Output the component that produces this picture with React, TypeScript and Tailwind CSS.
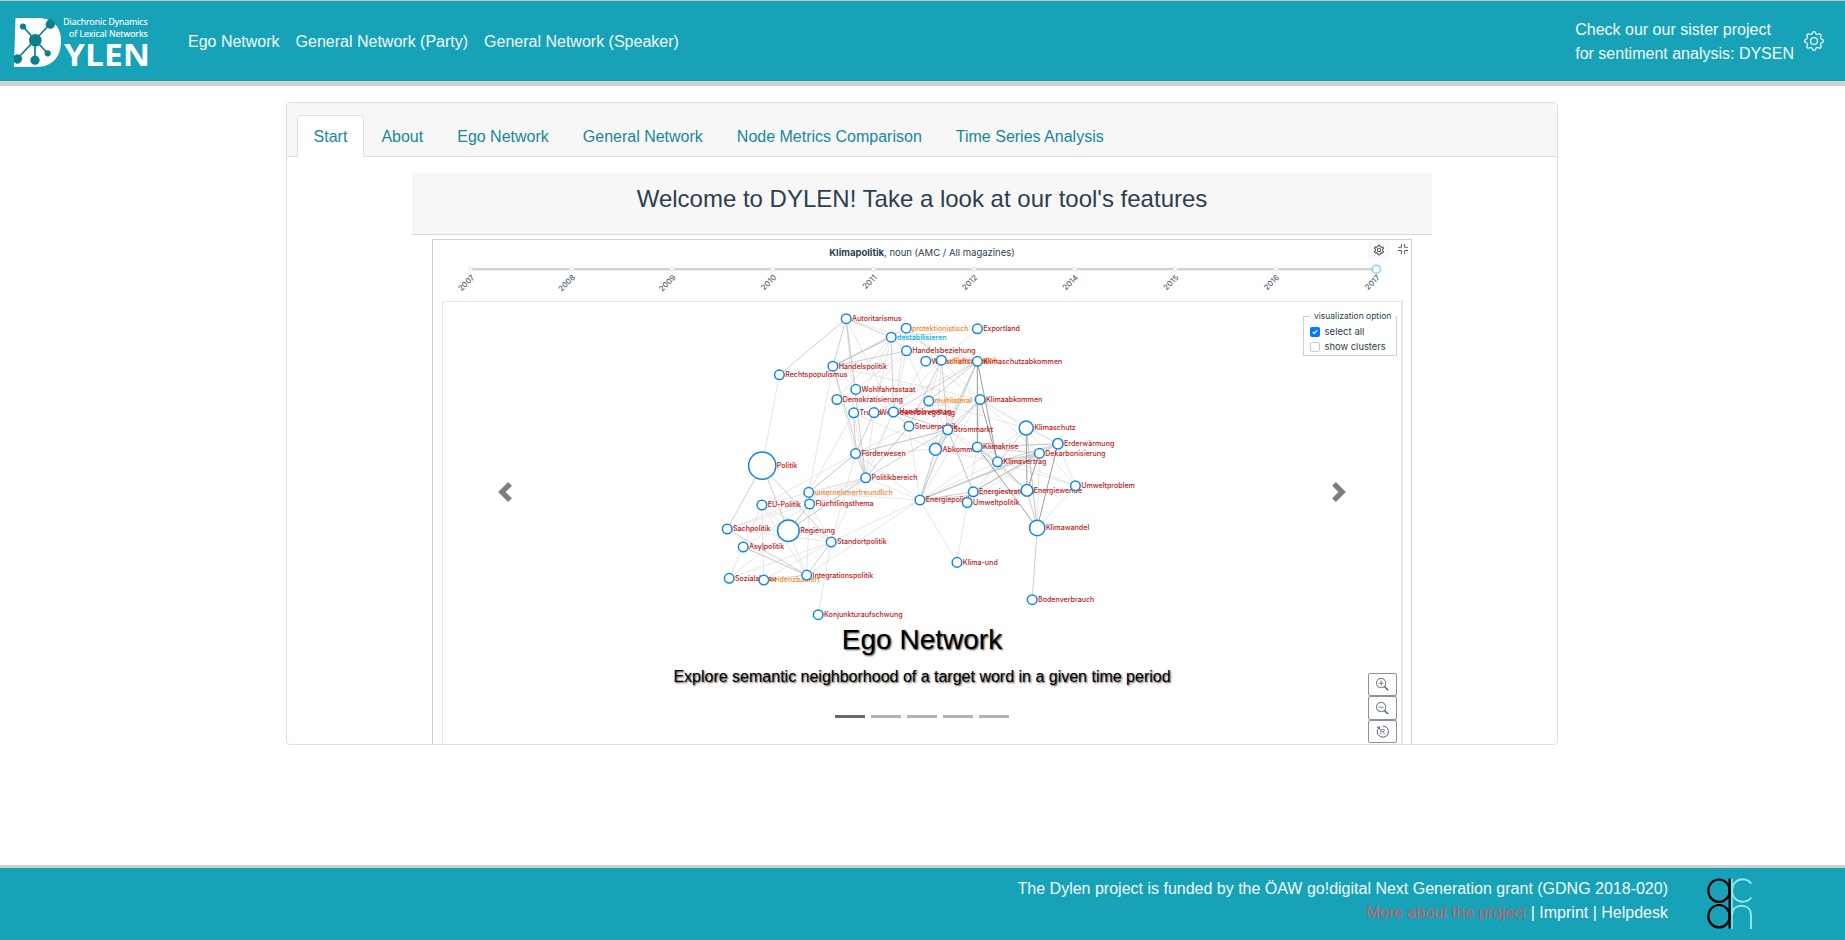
import { BsGear, BsFullscreenExit, BsZoomIn, BsZoomOut } from "react-icons/bs";
import { AiOutlineSetting } from "react-icons/ai";

type GraphNode = { id: string; x: number; y: number; r?: number; label: string; color?: string };

const ORANGE = "#f5871f";
const NODES: GraphNode[] = [
  { id: "aut", x: 846, y: 318.7, label: "Autoritarismus" },
  { id: "prot", x: 906, y: 328.2, label: "protektionistisch", color: ORANGE },
  { id: "dest", x: 891, y: 337.2, label: "destabilisieren", color: "#00aee0" },
  { id: "hbez", x: 906.3, y: 350.8, label: "Handelsbeziehung" },
  { id: "wirt", x: 925.6, y: 361.2, label: "Wirtschaftsraum" },
  { id: "volk", x: 941.2, y: 360.2, label: "völkerrechtlich", color: ORANGE },
  { id: "exp", x: 977.2, y: 328.8, label: "Exportland" },
  { id: "ksa", x: 977.2, y: 361.3, label: "Klimaschutzabkommen" },
  { id: "hpol", x: 832.7, y: 366.2, label: "Handelspolitik" },
  { id: "rech", x: 779.2, y: 374.8, label: "Rechtspopulismus" },
  { id: "wohl", x: 855.6, y: 389.4, label: "Wohlfahrtsstaat" },
  { id: "demo", x: 836.7, y: 399.5, label: "Demokratisierung" },
  { id: "tru", x: 853.5, y: 412.8, label: "Trump" },
  { id: "wett", x: 873.8, y: 412.6, label: "Wettbewerbsregelung" },
  { id: "hver", x: 893.2, y: 412, label: "Handelsvertrag" },
  { id: "mult", x: 928.6, y: 401, label: "multilateral", color: ORANGE },
  { id: "kab", x: 980, y: 399.5, label: "Klimaabkommen" },
  { id: "steu", x: 908.8, y: 426.2, label: "Steuerpolitik" },
  { id: "stro", x: 947.5, y: 429.8, label: "Strommarkt" },
  { id: "abk", x: 935.3, y: 449.3, r: 6, label: "Abkommen" },
  { id: "kkr", x: 977.1, y: 447, label: "Klimakrise" },
  { id: "foer", x: 855.4, y: 453.6, label: "Förderwesen" },
  { id: "kver", x: 997.3, y: 461.8, label: "Klimavertrag" },
  { id: "ksch", x: 1026, y: 428, r: 7, label: "Klimaschutz" },
  { id: "erd", x: 1057.7, y: 443.8, r: 5.2, label: "Erderwärmung" },
  { id: "dek", x: 1039.2, y: 453.4, label: "Dekarbonisierung" },
  { id: "pbe", x: 865.5, y: 477.8, label: "Politikbereich" },
  { id: "pol", x: 762, y: 465.7, r: 13.6, label: "Politik" },
  { id: "unt", x: 808.5, y: 492.4, label: "unternehmerfreundlich", color: ORANGE },
  { id: "flu", x: 809.4, y: 504, label: "Flüchtlingsthema" },
  { id: "eu", x: 761.7, y: 505, label: "EU-Politik" },
  { id: "reg", x: 788.2, y: 530.7, r: 10.8, label: "Regierung" },
  { id: "sach", x: 727, y: 529, label: "Sachpolitik" },
  { id: "asyl", x: 743, y: 547, label: "Asylpolitik" },
  { id: "soz", x: 729, y: 578.3, label: "Sozialabbau" },
  { id: "evi", x: 763.6, y: 580, label: "evidenzbasiert", color: ORANGE },
  { id: "int", x: 806.5, y: 575.1, label: "Integrationspolitik" },
  { id: "sta", x: 831, y: 542, label: "Standortpolitik" },
  { id: "kon", x: 818, y: 614.7, label: "Konjunkturaufschwung" },
  { id: "epo", x: 919.7, y: 500, label: "Energiepolitik" },
  { id: "est", x: 973, y: 491.8, label: "Energiestrategie" },
  { id: "upo", x: 967, y: 502.6, label: "Umweltpolitik" },
  { id: "ewe", x: 1026.8, y: 490.4, r: 5.8, label: "Energiewende" },
  { id: "upr", x: 1075.2, y: 485.7, label: "Umweltproblem" },
  { id: "kwa", x: 1037, y: 528, r: 7.7, label: "Klimawandel" },
  { id: "kun", x: 956.8, y: 562.4, label: "Klima-und" },
  { id: "bod", x: 1032, y: 599.7, label: "Bodenverbrauch" },
];

const BY_ID: Record<string, GraphNode> = Object.fromEntries(NODES.map((n) => [n.id, n]));

const LIGHT =
  "rech-pol aut-wohl aut-tru aut-hver aut-ksa dest-exp dest-hpol dest-tru dest-wett prot-ksa prot-hver hbez-mult hbez-hver hbez-tru volk-hver volk-abk volk-kab volk-mult wirt-hver ksa-wett hpol-wohl hpol-kab hpol-foer demo-dest wohl-hver wohl-hbez tru-abk tru-pbe wett-pbe hver-pbe hver-kab mult-kab mult-steu mult-stro mult-ksch steu-pbe steu-epo steu-abk stro-kkr stro-ewe stro-est stro-foer abk-kab abk-kver abk-epo abk-foer kab-ksch kab-erd kab-kkr kab-epo kab-dek ksa-kkr ksa-epo ksch-erd ksch-kver ksch-est ksch-upr ksch-epo ksch-upo erd-upr erd-kkr dek-epo dek-ewe dek-upo dek-est kkr-upr kkr-upo kver-dek kver-ewe kver-epo kver-upr upr-kwa kwa-ksch kwa-dek upo-kun epo-kun upo-epo ewe-est foer-unt foer-epo foer-eu foer-sta pbe-epo pbe-sach pbe-unt pbe-flu pbe-eu pbe-reg unt-epo unt-hpol flu-sach flu-reg flu-int flu-sta flu-asyl eu-int eu-evi eu-asyl eu-sta eu-reg sach-reg sach-sta sta-soz sta-evi sta-epo epo-int sta-kon reg-soz reg-int asyl-soz asyl-int tru-unt hver-sta exp-volk wirt-kab steu-foer";
const MEDIUM =
  "aut-rech aut-dest aut-hpol aut-pbe dest-hbez dest-hver prot-volk prot-hpol hbez-hpol hpol-dest volk-steu volk-stro ksa-hver ksa-mult ksa-abk ksa-stro kab-stro kab-abk stro-pbe stro-foer stro-abk stro-est stro-epo steu-pbe hver-steu hver-stro tru-foer wett-foer hpol-pbe foer-pbe pbe-reg pol-sach pol-reg pol-sta unt-foer flu-reg sta-int sach-int asyl-int evi-int kkr-ewe kkr-erd kkr-dek kver-erd kver-dek kver-kkr abk-epo est-epo est-dek est-erd epo-ewe epo-dek epo-erd ewe-kver ewe-kwa ksch-kwa kwa-bod";
const DARK = "ksa-kver kab-kver ksa-kkr kkr-kwa ksch-ewe dek-ewe erd-kwa";

function Edges({ list, stroke, width }: { list: string; stroke: string; width: number }) {
  return (
    <g stroke={stroke} strokeWidth={width}>
      {list.split(" ").map((e, i) => {
        const [a, b] = e.split("-").map((k) => BY_ID[k]);
        return <line key={i} x1={a.x} y1={a.y} x2={b.x} y2={b.y} />;
      })}
    </g>
  );
}

const YEARS = ["2007", "2008", "2009", "2010", "2011", "2012", "2014", "2015", "2016", "2017"];

function Timeline() {
  return (
    <svg className="block h-[40px] w-full" viewBox="433 261 978 40">
      <rect x="471" y="268" width="905" height="2.4" fill="#d2d2d2" />
      {YEARS.map((y, i) => {
        const x = 471 + i * 100.6;
        const last = i === YEARS.length - 1;
        return (
          <g key={y}>
            <circle cx={x} cy="269.2" r={last ? 4.1 : 1.9} fill="#fff" stroke={last ? "#7ccbff" : "#e4e4e4"} strokeWidth={last ? 1.4 : 1} />
            <text
              transform={`translate(${x + 4} 278) rotate(-45)`}
              textAnchor="end"
              fontSize="7.8"
              fontWeight="500"
              fill="#52606d"
              className="font-['Inter',sans-serif]"
            >
              {y}
            </text>
          </g>
        );
      })}
    </svg>
  );
}

function Graph() {
  return (
    <svg className="block h-[444px] w-full" viewBox="443.8 302 956 444">
      <Edges list={LIGHT} stroke="#dfdfdf" width={0.8} />
      <Edges list={MEDIUM} stroke="#c2c2c2" width={0.8} />
      <Edges list={DARK} stroke="#9e9e9e" width={1} />
      <g fontSize="7.1" fontWeight="500" className="font-['Inter',sans-serif]">
        {NODES.map((n) => (
          <text key={n.id} x={n.x + (n.r ?? 4.8) + 1} y={n.y + 2.4} fill={n.color ?? "#bf1616"}>
            {n.label}
          </text>
        ))}
      </g>
      <g fill="#fff" stroke="#1188e0" strokeWidth="1.5">
        {NODES.map((n) => (
          <circle key={n.id} cx={n.x} cy={n.y} r={n.r ?? 4.8} />
        ))}
      </g>
    </svg>
  );
}

function DylenLogo() {
  return (
    <svg width="150" height="64" viewBox="0 0 150 64">
      <path d="M7.5 8H30C46 8 53 18 53 31C53 46 45 57 28 57H6Z" fill="#fff" />
      <g stroke="#0a808c" strokeWidth="1.7" fill="#0a808c">
        <path d="M15 16.5L27 30L42 14M9.5 48.5L27 30V50M27 30L39.5 43" fill="none" />
        <g stroke="none">
          <circle cx="15" cy="16.5" r="3.1" />
          <circle cx="42.3" cy="14.2" r="4.6" />
          <circle cx="27.3" cy="30.2" r="6.3" />
          <path d="M6 46a4.6 4.6 0 1 1 1.5 7.2L6 52z" />
          <circle cx="27" cy="50.2" r="4.6" />
          <circle cx="39.7" cy="43.3" r="3.1" />
        </g>
      </g>
      <g fill="#fff" className="font-['Open_Sans',sans-serif]">
        <text x="55.3" y="15.4" fontSize="9.3" stroke="#fff" strokeWidth="0.15" textLength="84.3" lengthAdjust="spacingAndGlyphs">
          Diachronic Dynamics
        </text>
        <text x="61" y="27.4" fontSize="9.3" stroke="#fff" strokeWidth="0.15" textLength="78.6" lengthAdjust="spacingAndGlyphs">
          of Lexical Networks
        </text>
        <text x="56" y="56" fontSize="31" fontWeight="700" textLength="86" lengthAdjust="spacingAndGlyphs">
          YLEN
        </text>
      </g>
    </svg>
  );
}

function AcdhLogo() {
  return (
    <svg width="46" height="52" viewBox="0 0 46 52" fill="none" strokeWidth="2.2">
      <g stroke="#95e6ea" strokeWidth="1.9">
        <path d="M25 1V51" strokeWidth="1.6" />
        <path d="M44.3 5.5C41.5 2.3 38.5 1.3 35.8 1.3C29.5 1.3 25 6 25 12.5S29.5 23.7 35.8 23.7C39 23.7 42 22.5 44.3 19.5" />
        <path d="M25 37C25 31 29 27.8 34.5 27.8S44 31 44 37V51" />
      </g>
      <g stroke="#000">
        <path d="M22.6 0.5V50.5" />
        <ellipse cx="12" cy="12.7" rx="10.7" ry="11.2" />
        <ellipse cx="12" cy="38.2" rx="10.7" ry="11.2" />
      </g>
    </svg>
  );
}

const TABS = ["Start", "About", "Ego Network", "General Network", "Node Metrics Comparison", "Time Series Analysis"];

function Chevron({ dir }: { dir: "prev" | "next" }) {
  return (
    <svg width="20" height="20" viewBox="0 0 8 8" fill="#000" opacity="0.5">
      <path
        d={
          dir === "prev"
            ? "M5.25 0l-4 4 4 4 1.5-1.5L4.25 4l2.5-2.5L5.25 0z"
            : "M2.75 0l-1.5 1.5L3.75 4l-2.5 2.5L2.75 8l4-4-4-4z"
        }
      />
    </svg>
  );
}

const ZOOM_BUTTON =
  "flex h-[23.6px] w-[28.8px] items-center justify-center rounded-[2px] border border-[#89939c] bg-white text-[#56626d]";

export default function App() {
  return (
    <div className="flex h-[940px] w-full flex-col overflow-hidden bg-white font-['Liberation_Sans',sans-serif] text-base text-[#2c3e50]">
      <header className="flex h-[86px] shrink-0 items-center border-t border-b-[5px] border-t-[#c4c4c4] border-b-[#d0d0d0] bg-[#17a2b8] pl-2 text-[#f2fafb]">
        <div className="mt-px w-[180px]">
          <DylenLogo />
        </div>
        <nav className="flex gap-4 pt-[2px]">
          <a>Ego Network</a>
          <a>General Network (Party)</a>
          <a>General Network (Speaker)</a>
        </nav>
        <div className="ml-auto pt-[2px] pr-2.5">
          Check our our sister project
          <br />
          for sentiment analysis: DYSEN
        </div>
        <BsGear className="mr-[21px] size-5" />
      </header>

      <main className="flex-1">
        <section className="mt-4 ml-[286px] h-[643px] w-[1272px] overflow-hidden rounded border border-[#dfdfdf] bg-white">
          <div className="flex h-[54px] items-end border-b border-[#dfdfdf] bg-[#f7f7f7] pl-[9.6px]">
            {TABS.map((t, i) => (
              <a
                key={t}
                className={
                  i === 0
                    ? "-mb-px h-[42px] rounded-t border border-b-0 border-[#dee2e6] bg-white px-4 pt-[9px] leading-6 text-[#17889a]"
                    : "-mb-px h-[42px] border border-transparent px-4 pt-[9px] leading-6 text-[#17889a]"
                }
              >
                {t}
              </a>
            ))}
          </div>

          <div className="mx-auto mt-4 w-[1020px]">
            <div className="h-[62px] rounded-t-[3px] border-b border-[#d8d8d8] bg-[#f7f7f7] pt-[11px] text-center text-2xl leading-[29px]">
              Welcome to DYLEN! Take a look at our tool's features
            </div>
          </div>

          <div className="relative mx-auto mt-1 h-[507px] w-[980px] border border-[#cfcfcf] bg-white">
            <div className="relative flex h-[21px] items-center justify-center pt-[5px] font-['Inter',sans-serif] text-[9.5px] leading-none">
              <span>
                <b className="font-bold">Klimapolitik</b>, noun (AMC / All magazines)
              </span>
              <div className="absolute top-0 right-0 flex items-center">
                <div className="flex h-[19px] w-[22px] items-center justify-center bg-[#f8f9fa]">
                  <AiOutlineSetting className="size-[12px] text-[#333]" />
                </div>
                <BsFullscreenExit className="mr-[3px] ml-2 -mt-px size-[10px] text-[#333]" strokeWidth={0.3} />
              </div>
            </div>
            <Timeline />
            <div className="ml-[9px] h-[450px] w-[961px] border-[1.5px] border-r-2 border-[#e6e6e6]">
              <Graph />
            </div>

            <fieldset className="absolute top-[69px] right-[14px] h-[47px] w-[94px] border-[1.5px] border-[#cfcfcf] pl-[6px] font-['Inter',sans-serif]">
              <legend className="px-1 text-[8.5px] leading-[14px] whitespace-nowrap">visualization option</legend>
              <label className="mt-[1.5px] flex h-[15px] items-center gap-[5px] text-[9.6px] leading-none">
                <span className="flex size-[9.5px] items-center justify-center rounded-[2px] bg-[#007bff]">
                  <svg width="6" height="6" viewBox="0 0 8 8" fill="none" stroke="#fff" strokeWidth="1.6">
                    <path d="M1 4l2 2 4-4.5" />
                  </svg>
                </span>
                select all
              </label>
              <label className="flex h-[15px] items-center gap-[5px] text-[9.4px] leading-none">
                <span className="size-[9.5px] rounded-[2px] border border-[#c5cad0] bg-white" />
                show clusters
              </label>
            </fieldset>

            <div className="absolute top-[432.5px] right-[14px] flex flex-col">
              <button className={ZOOM_BUTTON}>
                <BsZoomIn className="size-[12.5px]" />
              </button>
              <button className={ZOOM_BUTTON}>
                <BsZoomOut className="size-[12.5px]" />
              </button>
              <button className={ZOOM_BUTTON}>
                <svg width="13" height="13" viewBox="0 0 13 13" fill="none" stroke="currentColor" strokeWidth="1">
                  <path d="M3.2 2.4A5.6 5.6 0 1 0 7 1M0.8 2.2l2.7-.3-.1 2.5" />
                  <text x="6.5" y="9.3" textAnchor="middle" fontSize="7.5" fill="currentColor" stroke="none">
                    R
                  </text>
                </svg>
              </button>
            </div>

            <div className="absolute top-[242px] left-[62px]">
              <Chevron dir="prev" />
            </div>
            <div className="absolute top-[242px] right-[62px]">
              <Chevron dir="next" />
            </div>

            <div className="absolute inset-x-0 top-[383px] flex flex-col items-center text-black [text-shadow:1px_1px_2px_rgba(0,0,0,0.75)]">
              <h3 className="text-[28px] leading-[34px]">Ego Network</h3>
              <p className="mt-2 leading-6">Explore semantic neighborhood of a target word in a given time period</p>
            </div>
            <div className="absolute inset-x-0 top-[475px] flex justify-center gap-1.5">
              <span className="h-[3px] w-[30px] bg-[#666b6b]" />
              <span className="h-[3px] w-[30px] bg-[#b2b2b2]" />
              <span className="h-[3px] w-[30px] bg-[#b2b2b2]" />
              <span className="h-[3px] w-[30px] bg-[#b2b2b2]" />
              <span className="h-[3px] w-[30px] bg-[#b2b2b2]" />
            </div>
          </div>
        </section>
      </main>

      <footer className="flex h-[75px] shrink-0 items-start justify-end border-t-[3px] border-[#d0d0d0] bg-[#17a2b8] pt-2 pr-[92px] text-[#f2fafb]">
        <div className="pt-[1px] text-right">
          <p>The Dylen project is funded by the ÖAW go!digital Next Generation grant (GDNG 2018-020)</p>
          <p>
            <a className="text-[#c2606a]">More about the project</a> | Imprint | Helpdesk
          </p>
        </div>
        <div className="ml-[39px] pt-[2px]">
          <AcdhLogo />
        </div>
      </footer>
    </div>
  );
}
